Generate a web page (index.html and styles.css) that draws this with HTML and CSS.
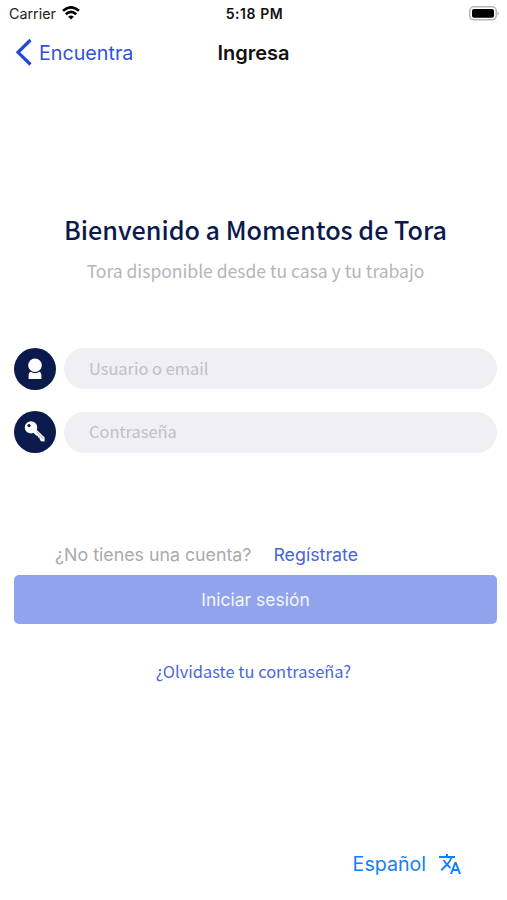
FILE: index.html
```html
<!DOCTYPE html>
<html lang="es">
<head>
<meta charset="utf-8">
<title>Ingresa</title>
<link rel="stylesheet" href="styles.css">
</head>
<body>
<div class="screen">
  <header>
    <div class="status">
      <div class="carrier"><span>Carrier</span>
        <svg width="18" height="14" viewBox="0 0 18 14" fill="none" stroke="#000" stroke-width="2.6"><path d="M1 4.8Q9-2.2 17 4.8M3.8 8.2Q9 3.7 14.2 8.2"/><path d="M6.2 10.8Q9 8.4 11.8 10.8L9 13.6Z" fill="#000" stroke="none"/></svg>
      </div>
      <time class="clock">5:18 PM</time>
      <svg class="battery" width="31" height="15" viewBox="0 0 31 15"><rect x=".8" y=".8" width="26.4" height="13" rx="4" fill="#fff" stroke="#b5b5b5" stroke-width="1.5"/><rect x="3" y="3" width="22" height="8.8" rx="2" fill="#000"/><path d="M28.5 5Q31 7.3 28.5 9.6Z" fill="#a5a5a5"/></svg>
    </div>
    <nav class="nav">
      <a class="back"><svg width="17" height="28" viewBox="0 0 17 28" fill="none" stroke="#2348d8" stroke-width="3.2"><path d="M15.5 2L3 14.3L15.5 26.5"/></svg><span>Encuentra</span></a>
      <h1>Ingresa</h1>
    </nav>
  </header>
  <main>
    <h2><span>Bienvenido a Momentos de Tora</span></h2>
    <p class="subtitle"><span>Tora disponible desde tu casa y tu trabajo</span></p>
    <form>
      <label class="field">
        <span class="badge"><svg width="42" height="42" viewBox="0 0 42 42" fill="#fff"><circle cx="21" cy="17.2" r="6.8"/><path d="M14.6 30.9V27Q14.8 24.4 16.6 23.8Q21 26.6 25.4 23.8Q27.2 24.4 27.4 27V30.9Z"/></svg></span>
        <input type="text" placeholder="Usuario o email">
      </label>
      <label class="field">
        <span class="badge"><svg width="42" height="42" viewBox="0 0 42 42"><path d="M19.5 17.6L22.4 18.4L30.6 26.6V30.6L27 30.2L25.6 28V26.8L24 26.4L23.6 24.8L22 24.4L18 20Z" fill="#fff"/><path d="M22.4 20.6L29.2 27.6" stroke="#0a1a4c" stroke-opacity=".55" stroke-width=".7"/><circle cx="17" cy="16.4" r="6.2" fill="#fff"/><circle cx="15" cy="14.6" r="1.6" fill="#0a1a4c"/></svg></span>
        <input type="password" placeholder="Contraseña">
      </label>
      <div class="signup"><span class="question">¿No tienes una cuenta?</span><a class="register">Regístrate</a></div>
      <button type="button"><span>Iniciar sesión</span></button>
    </form>
    <a class="forgot"><span>¿Olvidaste tu contraseña?</span></a>
  </main>
  <footer><span>Español</span><svg width="24" height="24" viewBox="0 0 24 24" fill="#147efb"><path d="M12.87 15.07l-2.54-2.51.03-.03A17.52 17.52 0 0 0 14.07 6H17V4h-7V2H8v2H1v2h11.17C11.5 7.92 10.44 9.75 9 11.35 8.07 10.32 7.3 9.19 6.69 8h-2c.73 1.63 1.73 3.17 2.98 4.56l-5.09 5.02L4 19l5-5 3.11 3.11.76-2.04zM18.5 10h-2L12 22h2l1.12-3h4.75L21 22h2l-4.5-12zm-2.62 7l1.62-4.33L19.12 17h-3.24z"/></svg></footer>
</div>
</body>
</html>
```
FILE: styles.css
```css
* { box-sizing: border-box; }
body { margin: 0; background: #fff; font-family: Inter, sans-serif; }
.screen { width: 507px; height: 900px; display: flex; flex-direction: column; }
h1, h2, p { margin: 0; }
.status { height: 27px; padding: 0 7px 0 9px; display: grid; grid-template-columns: 1fr auto 1fr; align-items: center; }
.carrier { display: flex; align-items: center; gap: 6px; font-size: 14.3px; color: #222; }
.carrier svg { margin-top: -2px; }
.clock { font-size: 14px; font-weight: 600; letter-spacing: .55px; color: #111; }
.battery { justify-self: end; margin-top: -1px; }
.nav { height: 50px; display: grid; grid-template-columns: 1fr auto 1fr; align-items: center; padding: 0 15px; }
.back { display: flex; align-items: center; gap: 7px; font-size: 19.7px; color: #2f53d9; }
.back span, .nav h1 { padding-top: 1px; }
.nav h1 { font-size: 20px; font-weight: 600; color: #111; }
main { padding: 132px 10px 0 14px; text-align: center; font-family: "Noto Sans CJK SC", sans-serif; }
h2 { height: 41px; line-height: 41px; font-size: 25.15px; font-weight: 500; color: #0a1a4c; }
.subtitle { height: 42px; line-height: 42px; font-size: 17.5px; color: #b2b5bc; }
form { padding-top: 55.5px; }
.field { display: flex; align-items: center; gap: 8px; margin-bottom: 21.5px; height: 42px; }
.badge { width: 42px; height: 42px; border-radius: 50%; background: #0a1a4c; flex: none; }
.badge svg { display: block; }
input { flex: 1; min-width: 0; height: 41px; border: 0; border-radius: 21px; padding: 0 25px 2px; background: #efeff4; font: 16.4px "Noto Sans CJK SC", sans-serif; }
input::placeholder { color: #bfc0c6; opacity: 1; }
.signup { height: 40px; margin-top: 81.5px; padding-left: 41px; display: flex; align-items: center; gap: 22px; font: 17.8px Inter, sans-serif; color: #aaa; }
.register { color: #4665d8; }
button { width: 100%; height: 49px; border: 0; border-radius: 5px; background: #91a3ed; color: #f4f6ff; font: 17.5px Inter, sans-serif; display: block; }
.forgot { display: block; height: 40px; line-height: 40px; margin-top: 27px; padding-right: 4px; font-size: 16.45px; color: #4969d9; }
footer { margin-top: auto; height: 72px; padding-right: 45px; display: flex; align-items: center; justify-content: flex-end; gap: 12px; font-size: 19.6px; color: #147efb; }
```
